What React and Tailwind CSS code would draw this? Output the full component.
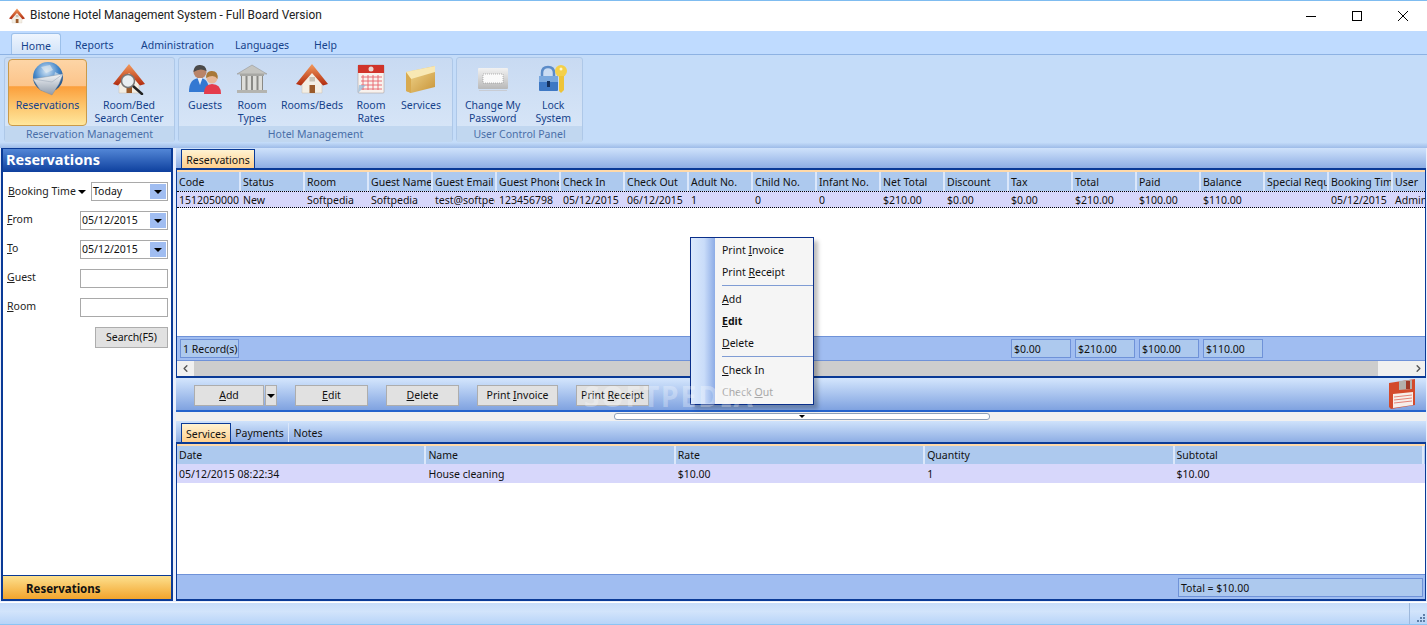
import React from 'react';
import { ChevronLeft, ChevronRight } from 'lucide-react';

const font = 'font-["Noto_Sans","Open_Sans",sans-serif]';

const mainCols = [
  ['Code', '1512050000'],
  ['Status', 'New'],
  ['Room', 'Softpedia'],
  ['Guest Name', 'Softpedia'],
  ['Guest Email', 'test@softpedia'],
  ['Guest Phone', '123456798'],
  ['Check In', '05/12/2015'],
  ['Check Out', '06/12/2015'],
  ['Adult No.', '1'],
  ['Child No.', '0'],
  ['Infant No.', '0'],
  ['Net Total', '$210.00'],
  ['Discount', '$0.00'],
  ['Tax', '$0.00'],
  ['Total', '$210.00'],
  ['Paid', '$100.00'],
  ['Balance', '$110.00'],
  ['Special Requests', ''],
  ['Booking Time', '05/12/2015'],
  ['User', 'Admin'],
];

const serviceCols = [
  ['Date', '05/12/2015 08:22:34'],
  ['Name', 'House cleaning'],
  ['Rate', '$10.00'],
  ['Quantity', '1'],
  ['Subtotal', '$10.00'],
];

function HouseIcon({ id, size = 32 }) {
  return (
    <svg width={size} height={size} viewBox="0 0 32 32">
      <defs>
        <linearGradient id={id} x1="0" y1="0" x2="0" y2="1">
          <stop offset="0" stopColor="#f39a5c" />
          <stop offset="1" stopColor="#b02a0e" />
        </linearGradient>
      </defs>
      <path d="M6 17 L16 8 L26 17 V30 H6 Z" fill="#f3eee4" stroke="#c9bfae" strokeWidth="0.5" />
      <path d="M0 21 L16 1 L32 21 L27 22.5 L16 10 L5 22.5 Z" fill={`url(#${id})`} />
      <rect x="13.5" y="22" width="5.5" height="8" fill="#9a5a2a" />
      <rect x="13.5" y="14" width="5.5" height="4.5" fill="#c8c2b6" />
    </svg>
  );
}

function GlobeIcon() {
  return (
    <svg width="32" height="34" viewBox="0 0 32 34">
      <defs>
        <radialGradient id="globeFill" cx="0.45" cy="0.3" r="0.8">
          <stop offset="0" stopColor="#d4e6f6" />
          <stop offset="0.5" stopColor="#4486c8" />
          <stop offset="1" stopColor="#183a64" />
        </radialGradient>
        <linearGradient id="wrapFill" x1="0" y1="0" x2="0" y2="1">
          <stop offset="0" stopColor="#f4f6f8" />
          <stop offset="1" stopColor="#8e9aaa" />
        </linearGradient>
      </defs>
      <circle cx="16" cy="15" r="15" fill="url(#globeFill)" />
      <path d="M9 5 L18 3 L21 8 L14 11 Z M23 10 L29 13 L26 17 L22 15 Z" fill="#dfe8ee" opacity="0.65" />
      <path d="M1 17 L31 12 L27 22 L20 33 L8 28 Z" fill="url(#wrapFill)" stroke="#7e8a9a" strokeWidth="0.4" />
      <path d="M1 17 L20 20 L31 12" fill="none" stroke="#a8b2c0" strokeWidth="0.7" />
    </svg>
  );
}

function SearchHouseIcon() {
  return (
    <div className="relative w-[32px] h-[32px]">
      <HouseIcon id="searchRoof" />
      <svg className="absolute left-0 top-0" width="32" height="32" viewBox="0 0 32 32">
        <path d="M20 23 L29 31" stroke="#222" strokeWidth="2.5" strokeLinecap="round" />
        <circle cx="15" cy="18" r="6.5" fill="#e8eef2" stroke="#777" strokeWidth="1.5" />
      </svg>
    </div>
  );
}

function GuestsIcon() {
  return (
    <svg width="32" height="32" viewBox="0 0 32 32">
      <circle cx="11" cy="9" r="6.5" fill="#b98468" />
      <path d="M4.5 9 Q5 1.5 11 2 Q17 2 17.5 8 Q11 4.5 4.5 9 Z" fill="#4a4a4a" />
      <path d="M0 29 Q0 15 11 15 Q20 15 20 29 Z" fill="#3378d2" />
      <path d="M8.5 15 L11 22 L13.5 15 Z" fill="#e6eef8" />
      <circle cx="23" cy="15" r="5.5" fill="#e6b898" />
      <path d="M17 15 Q17 7.5 23 8 Q29.5 8 28.5 16 Q25 10.5 17 15 Z" fill="#a87838" />
      <path d="M15 31 Q15 21 23 21 Q32 21 32 31 Z" fill="#e43c4c" />
    </svg>
  );
}

function BankIcon() {
  return (
    <svg width="32" height="30" viewBox="0 0 32 30">
      <path d="M16 1 L31 10 H1 Z" fill="#c4c4c0" stroke="#8e8e8a" strokeWidth="0.5" />
      <rect x="4" y="10" width="24" height="2" fill="#a8a8a4" />
      <rect x="5" y="12" width="22" height="14" fill="#8a8a86" />
      <g fill="#dededa">
        <rect x="6" y="12" width="3.5" height="14" />
        <rect x="11.5" y="12" width="3.5" height="14" />
        <rect x="17" y="12" width="3.5" height="14" />
        <rect x="22.5" y="12" width="3.5" height="14" />
      </g>
      <rect x="1" y="26" width="30" height="3" fill="#b4b4b0" />
    </svg>
  );
}

function CalendarIcon() {
  return (
    <svg width="28" height="30" viewBox="0 0 28 30">
      <rect x="1" y="1" width="26" height="28" rx="1" fill="#f8f2ee" stroke="#a0908c" strokeWidth="0.5" />
      <rect x="1" y="1" width="26" height="8" fill="#d0342a" />
      <circle cx="14" cy="5" r="2.5" fill="#e8d8d4" />
      <path d="M6 11 V26 M11 11 V26 M16 11 V26 M21 11 V26 M4 13 H25 M4 17 H25 M4 21 H25 M4 25 H25" stroke="#e8606a" strokeWidth="0.9" />
      <path d="M1 29 L9 21 L2 21 Z" fill="#8fb8d8" opacity="0.7" />
    </svg>
  );
}

function BoxIcon() {
  return (
    <svg width="32" height="30" viewBox="0 0 32 30">
      <defs>
        <linearGradient id="boxFill" x1="0" y1="0" x2="1" y2="1">
          <stop offset="0" stopColor="#f4dc96" />
          <stop offset="1" stopColor="#c89438" />
        </linearGradient>
      </defs>
      <path d="M1 8 L30 2 V23 L6 29 L1 27 Z" fill="url(#boxFill)" />
      <path d="M1 8 L6 15 L30 8 V2 Z" fill="#f8e8b4" />
      <path d="M6 15 V29 L1 27 V8 Z" fill="#d8aa50" />
    </svg>
  );
}

function PasswordIcon() {
  return (
    <svg width="32" height="26" viewBox="0 0 32 26">
      <defs>
        <linearGradient id="pwFill" x1="0" y1="0" x2="0" y2="1">
          <stop offset="0" stopColor="#f2f2f2" />
          <stop offset="1" stopColor="#b8b8b8" />
        </linearGradient>
      </defs>
      <rect x="1" y="2" width="30" height="21" rx="1" fill="url(#pwFill)" />
      <rect x="6" y="8" width="20" height="9" fill="#fafafa" stroke="#8a8a8a" strokeWidth="0.6" strokeDasharray="1 1" />
      <rect x="2" y="24" width="28" height="1" fill="#c8ccd4" />
    </svg>
  );
}

function LockIcon() {
  return (
    <svg width="30" height="30" viewBox="0 0 30 30">
      <path d="M4 13 V9 Q4 3 10 3 Q16 3 16 9 V13" fill="none" stroke="#5c8cc8" strokeWidth="2.5" />
      <rect x="1" y="12" width="19" height="15" rx="1" fill="#3e78c4" />
      <rect x="1" y="12" width="19" height="6" fill="#7aa8de" />
      <rect x="9" y="17" width="3" height="6" fill="#14305c" />
      <circle cx="23" cy="7" r="6" fill="#f4d04a" />
      <path d="M21 12 H26 V26 L23 29 L21 27 Z" fill="#eec438" />
      <circle cx="23" cy="5" r="1.5" fill="#fff6c8" />
    </svg>
  );
}

function FloppyIcon() {
  return (
    <svg width="28" height="30" viewBox="0 0 28 30">
      <path d="M1 4 L27 0 V26 L3 30 L1 28 Z" fill="#d34a2c" />
      <path d="M11 2 L24 1 V10 L11 11 Z" fill="#b4b0ac" />
      <rect x="18" y="2" width="4" height="8" fill="#a03a28" />
      <path d="M5 15 L25 13 V26 L5 29 Z" fill="#f6eeea" />
      <path d="M6 18 L24 16 M6 21 L24 19 M6 24 L24 22" stroke="#e0675a" strokeWidth="0.8" />
    </svg>
  );
}

function WindowButtons() {
  return (
    <div className="ml-auto mr-[1px] flex items-center text-black">
      <div className="w-[46px] flex justify-center">
        <svg width="10" height="10" viewBox="0 0 10 10"><path d="M0 5.5 H10" stroke="currentColor" /></svg>
      </div>
      <div className="w-[46px] flex justify-center">
        <svg width="10" height="10" viewBox="0 0 10 10"><rect x="0.5" y="0.5" width="9" height="9" fill="none" stroke="currentColor" /></svg>
      </div>
      <div className="w-[46px] flex justify-center">
        <svg width="10" height="10" viewBox="0 0 10 10"><path d="M0 0 L10 10 M10 0 L0 10" stroke="currentColor" /></svg>
      </div>
    </div>
  );
}

function RibbonButton({ width, icon, lines, active }) {
  return (
    <div
      className={`flex flex-col items-center h-[67px] border text-[#15428b] text-[10.5px] leading-[13px] ${width} ${
        active
          ? 'border-[#c99a4a] rounded-sm bg-[linear-gradient(#fdd5a6_0%,#fcc48a_40%,#fb9f3c_41%,#fdc56c_70%,#ffe79d_100%)]'
          : 'border-transparent'
      }`}
    >
      <div className="h-[34px] mt-[2px] flex items-center justify-center">{icon}</div>
      <div className="mt-[3px] text-center whitespace-nowrap">
        {lines.map((line) => (
          <div key={line}>{line}</div>
        ))}
      </div>
    </div>
  );
}

function RibbonGroup({ width, label, pad, children }) {
  return (
    <div className={`flex flex-col h-[85px] rounded-[3px] border border-[#aec8e8] bg-[linear-gradient(#c8daf2,#d9e7f8)] ${width}`}>
      <div className={`flex flex-1 pt-[1px] ${pad}`}>{children}</div>
      <div className="h-[16px] bg-[#c1d7f0] text-[#4a6fa8] text-[10.5px] leading-[17px] text-center">{label}</div>
    </div>
  );
}

function ComboArrow({ className = '' }) {
  return (
    <div className={`w-[16px] h-[15px] bg-[#a0bdf1] flex items-center justify-center ${className}`}>
      <div className="w-0 h-0 border-x-[4px] border-x-transparent border-t-[4px] border-t-black" />
    </div>
  );
}

function FormRow({ label, children }) {
  return (
    <div className="flex items-center justify-between h-[19px]">
      <span className="text-[10.5px] text-[#222] -mt-[2px]">
        <u>{label[0]}</u>
        {label.slice(1)}
      </span>
      {children}
    </div>
  );
}

function DateBox({ value }) {
  return (
    <div className="w-[88px] h-[19px] border border-[#a9a9a9] flex items-center justify-between pl-[1px] pr-[1px] text-[10.5px]">
      <span>{value}</span>
      <ComboArrow />
    </div>
  );
}

function TextBox() {
  return <div className="w-[88px] h-[19px] border border-[#a9a9a9] bg-white" />;
}

function Sidebar() {
  return (
    <aside className="w-[172px] flex flex-col border-2 border-[#0a3a96] border-t-[1px] ml-[1px]">
      <div className="h-[23px] shrink-0 bg-[linear-gradient(#5286d6,#0e409e)] text-white font-bold text-[14.5px] leading-[21px] pl-[3px]">
        Reservations
      </div>
      <div className="flex-1 bg-white pl-[4px] pr-[3px] pt-[10px] flex flex-col gap-[10px]">
        <div className="flex items-center h-[19px]">
          <span className="text-[10.5px] text-[#222] ml-[1px] whitespace-nowrap">
            <u>B</u>ooking Time
          </span>
          <div className="ml-auto w-0 h-0 border-x-[4px] border-x-transparent border-t-[4px] border-t-black" />
          <div className="ml-[5px] w-[77px] h-[19px] border border-[#a9a9a9] flex items-center justify-between pl-[1px] pr-[1px] text-[10.5px]">
            <span>Today</span>
            <ComboArrow />
          </div>
        </div>
        <FormRow label="From">
          <DateBox value="05/12/2015" />
        </FormRow>
        <FormRow label="To">
          <DateBox value="05/12/2015" />
        </FormRow>
        <FormRow label="Guest">
          <TextBox />
        </FormRow>
        <FormRow label="Room">
          <TextBox />
        </FormRow>
        <div className="flex justify-end">
          <div className="w-[73px] h-[21px] bg-[#e1e1e1] border border-[#adadad] text-[10.5px] leading-[19px] text-center">
            Search(F5)
          </div>
        </div>
      </div>
      <div className="h-[24px] shrink-0 border-t border-[#0a3a96] bg-[linear-gradient(#fde08e,#f2a42c)] font-bold text-[11.5px] leading-[25px] pl-[23px]">
        Reservations
      </div>
    </aside>
  );
}

function TabStrip({ children, height }) {
  return (
    <div className={`flex items-end pl-[5px] shrink-0 border-b-2 border-[#0a3a96] bg-[linear-gradient(#cfe2fb,#8eaee4)] ${height}`}>
      {children}
    </div>
  );
}

function ActiveTab({ label, width }) {
  return (
    <div className={`h-[19px] border border-b-0 border-[#0a3a96] bg-[linear-gradient(#fff3d2,#ffcf8c)] text-[10.5px] leading-[21px] text-center ${width}`}>
      {label}
    </div>
  );
}

function SumBox({ children, className = '' }) {
  return (
    <div className={`h-[19px] border border-[#6f92d8] bg-[#adc9ee] text-[10.5px] leading-[19px] pl-[2px] overflow-hidden whitespace-nowrap ${className}`}>
      {children}
    </div>
  );
}

function ToolButton({ width, children, className = '' }) {
  return (
    <div className={`h-[21px] bg-[#e1e1e1] border border-[#adadad] text-[10.5px] leading-[19px] text-center ${width} ${className}`}>
      {children}
    </div>
  );
}

function HeaderCell({ label, width, className }) {
  return (
    <div className={`shrink-0 h-full pl-[2px] border-r-2 border-r-[#dbe7fa] text-[10.5px] overflow-hidden whitespace-nowrap ${width} ${className}`}>
      {label}
    </div>
  );
}

function ContextMenu() {
  return (
    <div className="absolute left-[690px] top-[237px] w-[124px] h-[168px] border border-[#0a2f8a] bg-[#f5f5f5] shadow-[4px_4px_4px_rgba(0,0,0,0.25)] flex text-[10.5px] text-[#111]">
      <div className="w-[24px] bg-[linear-gradient(90deg,#dbe9fc,#c9dcf9_55%,#8dace6)]" />
      <div className="flex-1 pl-[7px] pt-[1px]">
        <div className="h-[22px] leading-[22px]">Print <u>I</u>nvoice</div>
        <div className="h-[22px] leading-[22px]">Print <u>R</u>eceipt</div>
        <div className="h-px bg-[#7f9cd4] mt-[2px] mb-[2px]" />
        <div className="h-[22px] leading-[22px]"><u>A</u>dd</div>
        <div className="h-[22px] leading-[22px] font-bold"><u>E</u>dit</div>
        <div className="h-[22px] leading-[22px]"><u>D</u>elete</div>
        <div className="h-px bg-[#7f9cd4] mt-[2px] mb-[2px]" />
        <div className="h-[22px] leading-[22px]"><u>C</u>heck In</div>
        <div className="h-[22px] leading-[22px] text-[#a8a8a8]">Check <u>O</u>ut</div>
      </div>
    </div>
  );
}

export default function App() {
  return (
    <div className={`relative w-[1427px] h-[625px] overflow-hidden flex flex-col bg-[#e9eefb] text-[#111] ${font}`}>
      {/* title bar */}
      <div className="h-[31px] shrink-0 bg-white border-t border-[#7fbcf0] flex items-center pl-[9px]">
        <HouseIcon id="titleRoof" size={16} />
        <span className="ml-[5px] text-[11.9px] font-['Roboto',sans-serif] text-[#222]">Bistone Hotel Management System - Full Board Version</span>
        <WindowButtons />
      </div>

      {/* ribbon */}
      <div className="h-[23px] shrink-0 bg-[#bfdbff] flex items-end pl-[11px] text-[10.5px] text-[#15428b]">
        <div className="w-[50px] h-[21px] bg-[linear-gradient(#eef5fe,#d2e3f8)] border border-b-0 border-[#9cc0ea] rounded-t-[3px] text-center leading-[24px]">Home</div>
        <div className="ml-[14px] w-[39px] leading-[22px] h-[20px]">Reports</div>
        <div className="ml-[27px] w-[68px] leading-[22px] h-[20px] whitespace-nowrap">Administration</div>
        <div className="ml-[26px] w-[53px] leading-[22px] h-[20px]">Languages</div>
        <div className="ml-[26px] leading-[22px] h-[20px]">Help</div>
      </div>
      <div className="h-[94px] shrink-0 border-t border-[#8db2e3] bg-[linear-gradient(#c4dcf9_0%,#c4dcf9_94%,#9dbbe8_100%)] pl-[4px] pt-[2px] flex gap-[3px]">
        <RibbonGroup width="w-[171px]" label="Reservation Management" pad="pl-[3px]">
          <RibbonButton width="w-[79px]" active icon={<GlobeIcon />} lines={['Reservations']} />
          <RibbonButton width="w-[84px]" icon={<SearchHouseIcon />} lines={['Room/Bed', 'Search Center']} />
        </RibbonGroup>
        <RibbonGroup width="w-[275px]" label="Hotel Management" pad="pl-[4px]">
          <RibbonButton width="w-[44px]" icon={<GuestsIcon />} lines={['Guests']} />
          <RibbonButton width="w-[50px]" icon={<BankIcon />} lines={['Room', 'Types']} />
          <RibbonButton width="w-[70px]" icon={<HouseIcon id="roomsRoof" />} lines={['Rooms/Beds']} />
          <RibbonButton width="w-[48px]" icon={<CalendarIcon />} lines={['Room', 'Rates']} />
          <RibbonButton width="w-[52px]" icon={<BoxIcon />} lines={['Services']} />
        </RibbonGroup>
        <RibbonGroup width="w-[127px]" label="User Control Panel" pad="pl-[4px]">
          <RibbonButton width="w-[64px]" icon={<PasswordIcon />} lines={['Change My', 'Password']} />
          <RibbonButton width="w-[58px]" icon={<LockIcon />} lines={['Lock', 'System']} />
        </RibbonGroup>
      </div>

      {/* main */}
      <div className="h-[453px] shrink-0 flex gap-[3px] mr-[1px]">
        <Sidebar />
        <main className="flex-1 min-w-0 flex flex-col">
          <TabStrip height="h-[22px]">
            <ActiveTab label="Reservations" width="w-[74px]" />
          </TabStrip>
          <div className="h-[208px] shrink-0 flex flex-col border-x border-b-2 border-[#0a3a96] bg-white overflow-hidden">
            <div className="h-[2px] shrink-0 bg-[#ffd9a8]" />
            <div className="h-[19px] flex bg-[#adc9ee] shrink-0">
              {mainCols.map(([label]) => (
                <HeaderCell key={label} label={label} width="w-16" className="leading-[21px]" />
              ))}
            </div>
            <div className="h-[17px] flex bg-[#d7d7fb] border-y border-dotted border-black shrink-0">
              {mainCols.map(([label, value]) => (
                <div key={label} className="w-[62px] mr-[2px] shrink-0 pl-[2px] text-[10.5px] leading-[16px] overflow-hidden whitespace-nowrap">
                  {value}
                </div>
              ))}
            </div>
            <div className="flex-1" />
            <div className="h-[25px] shrink-0 border-y border-[#6f92d8] bg-[#a0bdf1] flex items-center pl-[3px]">
              <SumBox className="w-[59px]">1 Record(s)</SumBox>
              <div className="ml-[772px] flex gap-[4px]">
                <SumBox className="w-[60px]">$0.00</SumBox>
                <SumBox className="w-[60px]">$210.00</SumBox>
                <SumBox className="w-[60px]">$100.00</SumBox>
                <SumBox className="w-[60px]">$110.00</SumBox>
              </div>
            </div>
            <div className="h-[15px] shrink-0 flex bg-[#f0f0f0] text-[#555]">
              <div className="w-[17px] flex items-center justify-center"><ChevronLeft size={11} strokeWidth={3} /></div>
              <div className="w-[1184px] bg-[#cdcdcd]" />
              <div className="flex-1 flex items-center justify-end pr-[1px]"><ChevronRight size={11} strokeWidth={3} /></div>
            </div>
          </div>
          <div className="h-[34px] shrink-0 border-b-2 border-[#2563cc] bg-[linear-gradient(#d4e6fd,#7fa2e0)] flex items-center pl-[18px] pt-[3px]">
            <ToolButton width="w-[70px]"><u>A</u>dd</ToolButton>
            <div className="ml-px w-[12px] h-[21px] bg-[#e1e1e1] border border-[#adadad] flex items-center justify-center">
              <div className="w-0 h-0 border-x-[4px] border-x-transparent border-t-[4px] border-t-black" />
            </div>
            <ToolButton width="w-[73px]" className="ml-[18px]"><u>E</u>dit</ToolButton>
            <ToolButton width="w-[73px]" className="ml-[18px]"><u>D</u>elete</ToolButton>
            <ToolButton width="w-[81px]" className="ml-[18px]">Print <u>I</u>nvoice</ToolButton>
            <ToolButton width="w-[73px]" className="ml-[18px]">Print <u>R</u>eceipt</ToolButton>
            <div className="ml-auto mr-[10px] -mt-[3px] flex"><FloppyIcon /></div>
          </div>
          {/* splitter */}
          <div className="h-[9px] shrink-0 bg-[#f0f0f0] flex justify-center">
            <div className="w-[376px] h-[7px] mt-[1px] ml-[1px] border border-[#8ea0b8] rounded-[3px] bg-white flex justify-center">
              <div className="mt-[1px] w-0 h-0 border-x-[3px] border-x-transparent border-t-[3px] border-t-black" />
            </div>
          </div>
          <TabStrip height="h-[23px]">
            <ActiveTab label="Services" width="w-[50px]" />
            <div className="h-[19px] w-[58px] border-r border-[#dbe7fa] text-[10.5px] leading-[21px] text-center">Payments</div>
            <div className="h-[19px] w-[38px] text-[10.5px] leading-[21px] text-center">Notes</div>
          </TabStrip>
          <div className="flex-1 flex flex-col border-x border-b-2 border-[#0a3a96] bg-white overflow-hidden">
            <div className="h-[2px] shrink-0 bg-[#ffd9a8]" />
            <div className="h-[18px] flex bg-[#adc9ee] shrink-0">
              {serviceCols.map(([label]) => (
                <HeaderCell key={label} label={label} width="w-[249.4px]" className="leading-[19px]" />
              ))}
            </div>
            <div className="h-[19px] flex bg-[#d7d7fb] shrink-0">
              {serviceCols.map(([label, value]) => (
                <div key={label} className="w-[249.4px] shrink-0 pl-[2px] text-[10.5px] leading-[21px] whitespace-nowrap">
                  {value}
                </div>
              ))}
            </div>
            <div className="flex-1" />
            <div className="h-[25px] shrink-0 border-t border-[#6f92d8] bg-[#a0bdf1] flex items-center justify-end pr-[2px]">
              <SumBox className="w-[245px]">Total = $10.00</SumBox>
            </div>
          </div>
        </main>
      </div>

      {/* status bar */}
      <div className="flex-1 mt-[1px] border-t border-white border-b border-b-[#8cc4f4] bg-[linear-gradient(#c6dcfa,#d2e4fb_40%,#b8d4f8)] flex justify-end">
        <div className="w-[18px] border-l border-[#9db8dc] flex flex-col items-end justify-end pb-[2px] pr-[2px] gap-[1px]">
          <div className="flex gap-[1px]"><i className="w-[2px] h-[2px] bg-[#5f7fa8]" /></div>
          <div className="flex gap-[1px]"><i className="w-[2px] h-[2px] bg-[#5f7fa8]" /><i className="w-[2px] h-[2px] bg-[#5f7fa8]" /></div>
          <div className="flex gap-[1px]"><i className="w-[2px] h-[2px] bg-[#5f7fa8]" /><i className="w-[2px] h-[2px] bg-[#5f7fa8]" /><i className="w-[2px] h-[2px] bg-[#5f7fa8]" /></div>
        </div>
      </div>

      <ContextMenu />
      <div className="absolute left-[584px] top-[379px] text-[28px] leading-[34px] font-bold tracking-[2px] text-white/30 whitespace-nowrap pointer-events-none">SOFTPEDIA</div>
    </div>
  );
}
